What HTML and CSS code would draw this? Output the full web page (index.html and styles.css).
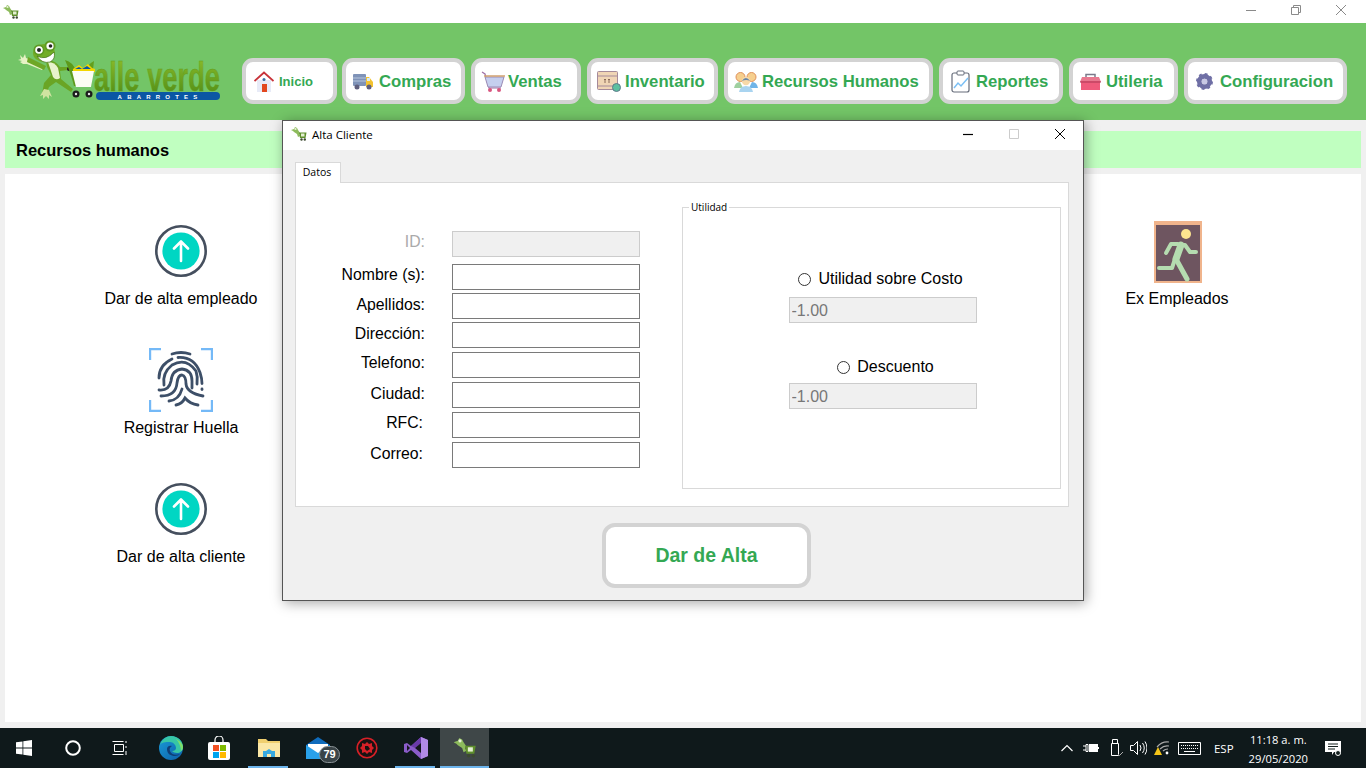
FILE: index.html
```html
<!DOCTYPE html>
<html lang="es">
<head>
    <meta charset="UTF-8">
    <title>Valle Verde Abarrotes</title>
    <link rel="stylesheet" href="styles.css">
</head>
<body>
    <svg class="svg-defs" width="0" height="0">
        <defs>
            <symbol id="frog-mini" viewBox="0 0 16 14">
                <path d="M0 3l3-1 1-2 2 1 1 2 2 3-1 1 1 2-2 1-1-3-3-2-1-1z" fill="#8dbb5c"/>
                <circle cx="4.500" cy="2" r="1.100" fill="#e8f2d8"/>
                <path d="M8 5.500h7.500l-1 5.500H9z" fill="#5f8f2c"/>
                <rect x="10" y="6.500" width="3.500" height="3" fill="#e4efd2"/>
                <circle cx="10.500" cy="12.500" r="1.200" fill="#3c4a30"/>
                <circle cx="13.800" cy="12.500" r="1.200" fill="#3c4a30"/>
            </symbol>
            <symbol id="up-circle" viewBox="0 0 52 52">
                <circle cx="26" cy="26" r="24.700" fill="#fff" stroke="#454f5e" stroke-width="2.600"/>
                <circle cx="26" cy="26" r="18.600" fill="#00d6c3"/>
                <path d="M26 36V17M19 23.500l7-7 7 7" fill="none" stroke="#fff" stroke-width="2.600" stroke-linecap="round" stroke-linejoin="round"/>
            </symbol>
            <linearGradient id="edge-blue" x1="0" y1="0" x2="1" y2="1">
                <stop offset="0" stop-color="#1a9bd8"/>
                <stop offset="1" stop-color="#0c5fa8"/>
            </linearGradient>
            <linearGradient id="logo-green" x1="0" y1="0" x2="0" y2="1">
                <stop offset="0" stop-color="#8fbe2c"/>
                <stop offset="1" stop-color="#4c8a14"/>
            </linearGradient>
        </defs>
    </svg>

    <div class="app-window">
        <div class="titlebar">
            <svg class="title-icon"><use href="#frog-mini"/></svg>
            <div class="win-controls">
                <svg width="12" height="12" viewBox="0 0 12 12"><path d="M1 6.500h10" stroke="#8a8a8a" fill="none"/></svg>
                <svg width="12" height="12" viewBox="0 0 12 12"><path d="M1.500 3.500h7v7h-7zM3.500 3.500v-2h7v7h-2" stroke="#8a8a8a" fill="none"/></svg>
                <svg width="12" height="12" viewBox="0 0 12 12"><path d="M1 1l10 10M11 1L1 11" stroke="#8a8a8a" fill="none"/></svg>
            </div>
        </div>

        <header class="topbar">
            <svg class="logo" viewBox="0 0 232 65" width="232" height="65">
                <path d="M10 20l3 3 2-4 1 4 3 1 15 8-2 3-15-6-4 0-3-2 2-1-4-1 3-1z" fill="#e6f2c4"/>
                <path d="M18 22l18 9-2 4-17-8z" fill="#6ea726"/>
                <path d="M36 26q8-2 14 6l8 0v3l-8 1 1 8 12 10-2 3-15-10-7 5-3 8-4-1 2-11 7-8-4-8z" fill="#6aa524"/>
                <path d="M38 27q7 0 10 6l2 10q-4 3-7-1z" fill="#e8f2cc"/>
                <path d="M34 54l5 1 3 7-3-2 0 4-3-3-3 3 0-4-3 1z" fill="#cfe3a0"/>
                <circle cx="59" cy="34" r="2" fill="#1c1c1c"/>
                <ellipse cx="34" cy="18" rx="11" ry="9" fill="#72ad26"/>
                <circle cx="29" cy="15" r="5.500" fill="#5e9a22"/>
                <circle cx="29" cy="15" r="3.800" fill="#fff"/>
                <circle cx="29" cy="15" r="2" fill="#222"/>
                <circle cx="40" cy="11" r="5.500" fill="#5e9a22"/>
                <circle cx="40" cy="11" r="3.600" fill="#fff"/>
                <circle cx="40.500" cy="11" r="1.800" fill="#222"/>
                <path d="M27 21q9 5 17-4 2 7-4 10-8 2-13-6z" fill="#fff" stroke="#3f6e14" stroke-width=".7"/>
                <path d="M55 25q8 2 11 11l3 15h-5q-3-12-9-26z" fill="#5d9a1b"/>
                <path d="M84 26l-3 26h-5l-2-13q2-9 10-13z" fill="#639f1c"/>
                <path d="M63 34l6-4 4 3 5-4 4 4 3 1v3H63z" fill="#f3d600"/>
                <path d="M65 34l4-2 3 2 5-3 4 3z" fill="#0b57a4"/>
                <path d="M62 36h22l-3 16H66z" fill="#fbfdf4"/>
                <circle cx="66" cy="59" r="3.500" fill="#1c1c1c"/>
                <circle cx="66" cy="59" r="1.200" fill="#e8e8e8"/>
                <circle cx="79" cy="59" r="3.500" fill="#1c1c1c"/>
                <circle cx="79" cy="59" r="1.200" fill="#e8e8e8"/>
                <text class="logo-name" x="84" y="56" textLength="126" lengthAdjust="spacingAndGlyphs">alle verde</text>
                <rect x="86" y="57" width="124" height="8" rx="4" fill="#0b57a4"/>
                <text class="logo-tag" x="150" y="63.500">ABARROTES</text>
            </svg>
            <nav class="main-nav">
                <button class="nav-btn btn-inicio">
                    <svg width="20" height="21" viewBox="0 0 20 21"><path d="M3 9h14v12H3z" fill="#e8ebf7"/><path d="M.5 10L10 1.500 19.500 10" fill="none" stroke="#c8333a" stroke-width="1.800"/><rect x="8" y="13" width="5" height="8" fill="#e2481f"/><circle cx="10" cy="8.500" r="1.500" fill="#3a6ea5"/></svg>
                    <span class="nav-small">Inicio</span>
                </button>
                <button class="nav-btn btn-compras">
                    <svg width="20" height="17" viewBox="0 0 20 17"><rect x="0" y="1" width="13" height="12" rx="1" fill="#7f93b8"/><path d="M0 5h13M0 8h13" stroke="#b8c6dd"/><path d="M13 4h3l4 5v5h-7z" fill="#f2c230"/><rect x="14" y="5" width="3" height="3" fill="#d9ecf5"/><circle cx="4" cy="14" r="2.500" fill="#5f5f7d"/><circle cx="16" cy="14" r="2.500" fill="#5f5f7d"/></svg>
                    <span>Compras</span>
                </button>
                <button class="nav-btn btn-ventas">
                    <svg width="24" height="21" viewBox="0 0 24 21"><path d="M1 1l3 2 4 14h12" fill="none" stroke="#a06fa6" stroke-width="1.200"/><path d="M4 6h19l-3 10H7z" fill="#c5cfef" stroke="#9b8bb5"/><path d="M3 5h21" stroke="#d0a070" stroke-width="1.500"/><circle cx="9" cy="19" r="2" fill="#d8557f"/><circle cx="18" cy="19" r="2" fill="#d8557f"/></svg>
                    <span>Ventas</span>
                </button>
                <button class="nav-btn btn-inventario">
                    <svg width="24" height="21" viewBox="0 0 24 21"><rect x=".5" y=".5" width="20" height="18" rx="1" fill="#f0d5b5" stroke="#a58a9a"/><path d="M1 5h19M1 15h19" stroke="#a58a9a"/><path d="M8 12V8M12 12V8M7 9l1-1 1 1M11 9l1-1 1 1" stroke="#8a6a5a" fill="none"/><circle cx="19.500" cy="16.500" r="4" fill="#5cc0a0" stroke="#5f7a8a"/></svg>
                    <span>Inventario</span>
                </button>
                <button class="nav-btn btn-rh">
                    <svg width="24" height="21" viewBox="0 0 24 21"><circle cx="6.500" cy="6" r="4.500" fill="#f6cf8e" stroke="#e0915c"/><circle cx="17.500" cy="6" r="4.500" fill="#f6cf8e" stroke="#e0915c"/><path d="M0 17q1-6 6-6l3 6z" fill="#9fd0a0"/><path d="M24 17q-1-6-6-6l-3 6z" fill="#6fb4e8"/><circle cx="12" cy="10" r="4.200" fill="#f7d9a8"/><path d="M7.800 10q4-6 8.400 0-4-2-8.400 0z" fill="#6a86a8"/><path d="M5 21q1-6 7-6t7 6z" fill="#a9d4f0"/></svg>
                    <span>Recursos Humanos</span>
                </button>
                <button class="nav-btn btn-reportes">
                    <svg width="19" height="23" viewBox="0 0 19 23"><rect x="1" y="3" width="17" height="19" rx="2" fill="#fff" stroke="#666c7a" stroke-width="1.200"/><rect x="6" y="1" width="7" height="4" rx="1" fill="#fff" stroke="#666c7a"/><path d="M3 18l4-5 3 3 7-8" fill="none" stroke="#7cc0f5" stroke-width="1.500"/></svg>
                    <span>Reportes</span>
                </button>
                <button class="nav-btn btn-utileria">
                    <svg width="21" height="17" viewBox="0 0 21 17"><path d="M6 5V1.500h9V5" fill="none" stroke="#7a7a8a" stroke-width="1.500"/><path d="M2 4h17l2 5H0z" fill="#e8788f"/><rect x="1" y="8" width="19" height="9" fill="#ef5b7c"/><path d="M0 9h21" stroke="#a93a55"/></svg>
                    <span>Utileria</span>
                </button>
                <button class="nav-btn btn-config">
                    <svg width="17" height="17" viewBox="0 0 18 18"><circle cx="9" cy="9" r="5.500" fill="none" stroke="#6f6fa5" stroke-width="5"/><circle cx="9" cy="9" r="8" fill="none" stroke="#6f6fa5" stroke-width="2" stroke-dasharray="3 3.280"/><circle cx="9" cy="9" r="2.800" fill="#c8c8e4"/></svg>
                    <span>Configuracion</span>
                </button>
            </nav>
        </header>

        <main class="content">
            <h2 class="section-title">Recursos humanos</h2>
            <section class="panel">
                <div class="actions">
                    <div class="action action-first">
                        <svg class="action-icon" width="52" height="52"><use href="#up-circle"/></svg>
                        <span>Dar de alta empleado</span>
                    </div>
                    <div class="action action-huella">
                        <svg width="64" height="64" viewBox="0 0 64 64">
                            <path d="M1 12V1h11M52 1h11v11M1 52v11h11M63 52v11H52" fill="none" stroke="#74b9f7" stroke-width="2.400"/>
                            <g fill="none" stroke="#3d4f68" stroke-width="2.800" stroke-linecap="round">
                                <path d="M23 6q9-3 18 0"/>
                                <path d="M10 30q0-13 13-19M29 9.500q16-1 22 15 2 6 2 11"/>
                                <path d="M15 37q-2-12 8-20 14-8 24 6 2 6 1 13"/>
                                <path d="M10 42q10 1 12-9 1-11 11-12 10 1 10 12l0 7"/>
                                <path d="M12 48q15 0 16-13 1-8 5-8 4 1 4 9 1 9 17 12"/>
                                <path d="M20 53q10-1 13-12"/>
                                <path d="M27 57q6-1 9-7 5 6 13 7"/>
                                <path d="M53 41v.5"/>
                            </g>
                        </svg>
                        <span>Registrar Huella</span>
                    </div>
                    <div class="action action-last">
                        <svg class="action-icon" width="52" height="52"><use href="#up-circle"/></svg>
                        <span>Dar de alta cliente</span>
                    </div>
                </div>
                <div class="actions actions-right">
                    <div class="action action-first">
                        <svg class="door-icon" width="48" height="62" viewBox="0 0 48 62">
                            <rect x="1" y="1" width="46" height="60" fill="#6e5560" stroke="#f0b48c" stroke-width="2"/>
                            <path d="M0 2.500h48" stroke="#f0b48c" stroke-width="3"/>
                            <circle cx="32" cy="13" r="5" fill="#fde58f"/>
                            <g fill="none" stroke="#b5dcb0" stroke-linejoin="round" stroke-linecap="round">
                                <path d="M26 24h5l5 7h6M24 23h-7l-5 9" stroke-width="4"/>
                                <path d="M27 24l-5 14" stroke-width="7"/>
                                <path d="M22 38l11 20" stroke-width="5"/>
                                <path d="M21 38l-3 9H5" stroke-width="4"/>
                            </g>
                        </svg>
                        <span>Ex Empleados</span>
                    </div>
                </div>
            </section>
        </main>

        <div class="dialog">
            <div class="dialog-title">
                <svg class="title-icon"><use href="#frog-mini"/></svg>
                <span class="dialog-name">Alta Cliente</span>
                <div class="dialog-controls">
                    <svg width="12" height="12" viewBox="0 0 12 12"><path d="M1 6.500h10" stroke="#000" stroke-width="1.200" fill="none"/></svg>
                    <svg width="12" height="12" viewBox="0 0 12 12"><path d="M1.500 1.500h9v9h-9z" stroke="#ccc" fill="none"/></svg>
                    <svg width="12" height="12" viewBox="0 0 12 12"><path d="M1 1l10 10M11 1L1 11" stroke="#000" fill="none"/></svg>
                </div>
            </div>
            <div class="dialog-body">
                <div class="tab">Datos</div>
                <div class="tab-panel">
                    <div class="form">
                        <div class="form-row row-id disabled"><label class="label-up">ID:</label><input type="text" disabled></div>
                        <div class="form-row row-first"><label class="label-up">Nombre (s):</label><input type="text"></div>
                        <div class="form-row"><label>Apellidos:</label><input type="text"></div>
                        <div class="form-row"><label>Dirección:</label><input type="text"></div>
                        <div class="form-row row-wide"><label class="label-up">Telefono:</label><input type="text"></div>
                        <div class="form-row row-wide"><label>Ciudad:</label><input type="text"></div>
                        <div class="form-row row-wide"><label class="label-short label-up">RFC:</label><input type="text"></div>
                        <div class="form-row row-wide"><label class="label-short">Correo:</label><input type="text"></div>
                    </div>
                    <fieldset class="utilidad">
                        <legend>Utilidad</legend>
                        <div class="radio-row radio-costo"><span class="radio"></span>Utilidad sobre Costo</div>
                        <input class="util-input" type="text" value="-1.00" disabled>
                        <div class="radio-row radio-desc"><span class="radio"></span>Descuento</div>
                        <input class="util-input util-input-desc" type="text" value="-1.00" disabled>
                    </fieldset>
                </div>
                <button class="submit-btn">Dar de Alta</button>
            </div>
        </div>
    </div>

    <footer class="taskbar">
        <div class="task-left">
            <span class="task-item"><svg width="16" height="16" viewBox="0 0 16 16"><path d="M0 2.300l6.500-.9v6.200H0zM7.300 1.300L16 0v7.600H7.300zM0 8.400h6.500v6.200L0 13.700zM7.300 8.400H16V16l-8.700-1.200z" fill="#fff"/></svg></span>
            <span class="task-item"><svg width="16" height="16" viewBox="0 0 16 16"><circle cx="8" cy="8" r="6.800" fill="none" stroke="#fff" stroke-width="2"/></svg></span>
            <span class="task-item task-view"><svg width="16" height="16" viewBox="0 0 16 16"><path d="M2.500 4.500h9v7h-9zM.5 1.500h11M.5 14.500h11M14 1v2M14 6v2M14 11v4" fill="none" stroke="#fff"/></svg></span>
            <span class="task-item"><svg width="24" height="24" viewBox="0 0 24 24"><circle cx="12" cy="12" r="12" fill="url(#edge-blue)"/><path d="M1 9C3 3 8 0 12 0c7 0 12 5 12 11 0 4-3 6-6 6-2 0-4-1-5-2 3 0 4-2 4-3 0-3-3-6-6-6C6 6 3 6 1 9z" fill="#37c6a6"/><path d="M17 3c4 2 7 5 7 8 0 2-1 3-2 4 0-4-2-9-5-12z" fill="#7ee06a"/><path d="M8 13c0 5 4 7 8 7 2 0 4-1 5-2-5 2-9 0-10-3-1-2 0-4 2-5-3-1-5 1-5 3z" fill="#0f3f78"/></svg></span>
            <span class="task-item task-nudge"><svg width="24" height="24" viewBox="0 0 24 24"><path d="M8 7V4a4 4 0 0 1 8 0v3" fill="none" stroke="#fff" stroke-width="1.200"/><rect x="1" y="6" width="22" height="18" rx="2" fill="#fff"/><rect x="6" y="9" width="6" height="6" fill="#f25022"/><rect x="13" y="9" width="6" height="6" fill="#7fba00"/><rect x="6" y="16" width="6" height="6" fill="#00a4ef"/><rect x="13" y="16" width="6" height="6" fill="#ffb900"/></svg></span>
            <span class="task-item task-active"><svg width="22" height="19" viewBox="0 0 22 19"><path d="M0 0h8l2 2h12v16H0z" fill="#f0cf6f"/><path d="M0 4h22v14H0z" fill="#fbe7a6"/><path d="M5 18v-6h3l3-2 3 2h3v6h-4v-3H9v3z" fill="#38a9e0"/></svg></span>
            <span class="task-item">
                <svg width="24" height="22" viewBox="0 0 24 22"><path d="M0 8L12 0l12 8v14H0z" fill="#0f6cbd"/><path d="M2 7h20v8l-10 3-10-3z" fill="#fff"/><path d="M0 8l12 8 12-8v14H0z" fill="#29a0ea"/></svg>
                <span class="badge">79</span>
            </span>
            <span class="task-item"><svg width="22" height="22" viewBox="0 0 22 22"><circle cx="11" cy="11" r="9.800" fill="#1a1212" stroke="#d62027" stroke-width="1.600"/><path d="M11 5l2 2 3-1v3l2 2-2 2v3l-3-1-2 2-2-2-3 1v-3l-2-2 2-2V6l3 1z" fill="#d62027"/><path d="M9 9h3l2 3-3 2-2-2z" fill="#1a1212"/></svg></span>
            <span class="task-item task-active"><svg width="24" height="24" viewBox="0 0 24 24"><path d="M17 1l7 3v16l-7 3L7 14l-4 3-3-1V8l3-1 4 3z" fill="#8a5cc9"/><path d="M17 1L7 10l4 2 6-5z" fill="#6a3aa8"/><path d="M17 7v10l-6-5z" fill="#14161c"/><path d="M3 9v6l3-3z" fill="#14161c"/><path d="M17 1l7 3v16l-7 3z" fill="#b18ae6"/></svg></span>
            <span class="task-item task-current"><svg width="24" height="20" viewBox="0 0 16 14"><use href="#frog-mini"/></svg></span>
        </div>
        <div class="tray">
            <svg width="12" height="8" viewBox="0 0 12 8"><path d="M.5 7L6 1.500 11.500 7" fill="none" stroke="#fff" stroke-width="1.200"/></svg>
            <svg class="tray-batt" width="16" height="10" viewBox="0 0 16 10"><path d="M0 3h3M0 7h3M3 1.500h2v7H3z" stroke="#fff" fill="none"/><rect x="6" y="1" width="9" height="8" fill="#fff"/><path d="M15 4h1v2h-1z" fill="#fff"/></svg>
            <svg class="tray-usb" width="14" height="18" viewBox="0 0 14 18"><path d="M2.500 4.500h7v12h-7zM3.500 .5h5v4h-5z" fill="none" stroke="#fff"/><path d="M9 15l1.500 1.500L14 13" fill="none" stroke="#aaa"/></svg>
            <svg class="tray-speaker" width="17" height="14" viewBox="0 0 17 14"><path d="M.5 4.500h3l4-4v13l-4-4h-3zM10 4q2 3 0 6M12.500 2q3.500 5 0 10M15 .5q4 6.500 0 13" fill="none" stroke="#fff"/></svg>
            <svg class="tray-wifi" width="16" height="14" viewBox="0 0 16 14"><path d="M3 6q5-6 12-5M6 8q4-4 9-3M9 10q2-2 5-2" fill="none" stroke="#a8a8a8" stroke-width="1.200"/><path d="M4 6l4 8H0z" fill="#f5c518"/><circle cx="13" cy="12" r="1.400" fill="#fff"/></svg>
            <svg width="23" height="13" viewBox="0 0 23 13"><path d="M.5 .5h22v12H.5z" fill="none" stroke="#fff"/><path d="M3 3.500h17M3 6.500h17" stroke="#fff" stroke-dasharray="1 1"/><path d="M6 9.500h11" stroke="#fff"/></svg>
            <span class="tray-lang">ESP</span>
            <div class="clock"><span>11:18 a. m.</span><span>29/05/2020</span></div>
            <svg class="tray-notify" width="16" height="15" viewBox="0 0 16 15"><path d="M0 0h16v11H9l-2 3v-3H0z" fill="#fff"/><path d="M3 3h10M3 5.500h10M3 8h7" stroke="#14201f"/><circle cx="13" cy="12" r="2.500" fill="#14201f" stroke="#fff"/></svg>
        </div>
    </footer>
</body>
</html>
```

FILE: styles.css
```css
* {
    box-sizing: border-box;
}
html, body {
    height: 100%;
}
body {
    margin: 0;
    width: 1366px;
    height: 768px;
    overflow: hidden;
    display: flex;
    flex-direction: column;
    font-family: "Liberation Sans", Arial, sans-serif;
    background-color: #f0f0f0;
    color: #000;
}
.svg-defs {
    position: absolute;
}
.app-window {
    position: relative;
    flex: 1;
    display: flex;
    flex-direction: column;
    min-height: 0;
}
.titlebar {
    height: 23px;
    background-color: #fff;
    display: flex;
    align-items: center;
    justify-content: space-between;
    padding-left: 3px;
    flex-shrink: 0;
}
.title-icon {
    width: 16px;
    height: 14px;
}
.win-controls {
    display: flex;
    gap: 33px;
    padding-right: 19px;
    margin-top: -4px;
}
.topbar {
    height: 97px;
    flex-shrink: 0;
    background-color: #73c567;
    display: flex;
    align-items: flex-start;
    padding: 35px 0 0 10px;
}
.logo {
    margin-top: -23px;
    flex-shrink: 0;
    overflow: visible;
}
.logo-name {
    font-family: "Liberation Sans", sans-serif;
    font-weight: bold;
    font-size: 40px;
    fill: url(#logo-green);
    stroke: #5f9c1c;
    stroke-width: 0.4px;
}
.logo-tag {
    font-family: "Liberation Sans", sans-serif;
    font-weight: bold;
    font-size: 6px;
    letter-spacing: 5.200px;
    text-anchor: middle;
    fill: #fff;
}
.main-nav {
    display: flex;
    gap: 5px;
}
.nav-btn {
    height: 46px;
    padding: 1px 0 0 7px;
    border: 4px solid #d3d3d3;
    border-radius: 11px;
    background-color: #fff;
    display: flex;
    align-items: center;
    justify-content: flex-start;
    gap: 5px;
    color: #34a853;
    font-family: "Liberation Sans", Arial, sans-serif;
    font-weight: bold;
    font-size: 16.700px;
    white-space: nowrap;
}
.nav-small {
    font-size: 13px;
}
.btn-inicio { width: 95px; padding-left: 8px; }
.btn-compras { width: 123px; gap: 6px; }
.btn-ventas { width: 110px; margin-left: 1px; padding-left: 6px; gap: 3px; }
.btn-inventario { width: 131px; margin-left: 1px; padding-left: 6px; gap: 4px; }
.btn-rh { width: 209px; margin-left: 1px; padding-left: 6px; gap: 4px; }
.btn-reportes { width: 124px; margin-left: 1px; padding-left: 8px; gap: 6px; }
.btn-utileria { width: 109px; margin-left: 1px; }
.btn-config { width: 163px; margin-left: 1px; padding-left: 8px; gap: 7px; }

.content {
    flex: 1;
    padding: 11px 5px 6px;
    display: flex;
    flex-direction: column;
    min-height: 0;
}
.section-title {
    height: 37px;
    margin: 0 0 6px;
    padding-left: 11px;
    background-color: #c0ffc0;
    font-size: 16.500px;
    font-weight: bold;
    line-height: 39px;
}
.panel {
    flex: 1;
    background-color: #fff;
    display: flex;
    justify-content: space-between;
}
.actions {
    width: 352px;
    display: flex;
    flex-direction: column;
    align-items: center;
}
.actions-right {
    width: 368px;
}
.action {
    display: flex;
    flex-direction: column;
    align-items: center;
    font-size: 16px;
    line-height: 18px;
}
.action-first {
    margin-top: 51px;
    gap: 13px;
}
.actions-right .action-first {
    margin-top: 47px;
    gap: 7px;
}
.door-icon {
    margin-left: 2px;
}
.action-huella {
    margin-top: 40px;
    gap: 7px;
}
.action-last {
    margin-top: 46px;
    gap: 13px;
}

/* ventana Alta Cliente */
.dialog {
    position: absolute;
    left: 282px;
    top: 120px;
    width: 802px;
    height: 481px;
    background-color: #f0f0f0;
    border: 1px solid #555;
    box-shadow: 2px 2px 12px rgba(0, 0, 0, 0.35);
    display: flex;
    flex-direction: column;
}
.dialog-title {
    height: 29px;
    flex-shrink: 0;
    background-color: #fff;
    display: flex;
    align-items: center;
    padding: 0 0 3px 8px;
}
.dialog-name {
    font-family: "Open Sans", sans-serif;
    font-size: 11.500px;
    margin-left: 5px;
}
.dialog-controls {
    margin-left: auto;
    display: flex;
    gap: 34px;
    padding-right: 17px;
}
.dialog-body {
    flex: 1;
    padding: 12px 14px 0 12px;
    display: flex;
    flex-direction: column;
    align-items: flex-start;
}
.tab {
    height: 21px;
    width: 46px;
    padding-right: 2px;
    background-color: #fff;
    border: 1px solid #d9d9d9;
    border-bottom: 0;
    font-family: "Open Sans", sans-serif;
    font-size: 10.500px;
    line-height: 19px;
    text-align: center;
    position: relative;
    z-index: 1;
}
.tab-panel {
    width: 774px;
    height: 325px;
    margin-top: -1px;
    background-color: #fff;
    border: 1px solid #d9d9d9;
    display: flex;
    align-items: flex-start;
    padding: 19px 7px 0 0;
    justify-content: space-between;
}
.form {
    margin-top: 29px;
    display: flex;
    flex-direction: column;
    gap: 3px;
}
.form-row {
    display: flex;
    align-items: center;
    height: 26px;
}
.form-row label {
    width: 129px;
    padding-bottom: 3px;
    text-align: right;
    font-size: 15.800px;
    margin-right: 27px;
}
.form-row label.label-short {
    width: 127px;
    margin-right: 29px;
}
.form-row label.label-up {
    padding-bottom: 5px;
}
.form-row input {
    width: 188px;
    height: 26px;
    border: 1px solid #7a7a7a;
    background-color: #fff;
    padding: 0;
}
.row-id label {
    color: #aaa;
}
.row-id input {
    border: 1px solid #ccc;
    background-color: #f0f0f0;
}
.row-first {
    margin-top: 4px;
}
.row-wide {
    margin-top: 1px;
}
.utilidad {
    width: 379px;
    height: 287px;
    margin: 0;
    padding: 0 0 0 22px;
    border: 1px solid #d9d9d9;
    display: flex;
    flex-direction: column;
    align-items: center;
}
.utilidad legend {
    margin-left: -16px;
    padding: 0 2px 0 2px;
    font-family: "Open Sans", sans-serif;
    font-size: 10px;
    line-height: 11px;
}
.radio-row {
    display: flex;
    align-items: center;
    gap: 7px;
    font-size: 16px;
    line-height: 18px;
}
.radio {
    width: 13px;
    height: 13px;
    border: 1px solid #333;
    border-radius: 50%;
    background-color: #fff;
}
.radio-costo {
    margin: 57px 4px 0 0;
}
.radio-desc {
    margin: 35px 0 0 6px;
}
.util-input {
    width: 188px;
    height: 26px;
    margin-top: 9px;
    padding: 1px 2px 0;
    border: 1px solid #ccc;
    background-color: #f0f0f0;
    color: #777;
    font-family: "Liberation Sans", sans-serif;
    font-size: 16px;
}
.util-input-desc {
    margin-top: 7px;
}
.submit-btn {
    width: 209px;
    height: 65px;
    margin: 16px 0 0 307px;
    background-color: #fff;
    border: 4px solid #d3d3d3;
    border-radius: 13px;
    color: #34a853;
    font-family: "Liberation Sans", Arial, sans-serif;
    font-weight: bold;
    font-size: 19.500px;
}

/* barra de tareas */
.taskbar {
    height: 40px;
    flex-shrink: 0;
    background-color: #0f191b;
    display: flex;
    justify-content: space-between;
    color: #fff;
}
.task-left {
    display: flex;
    margin-left: -1px;
}
.task-item {
    width: 49px;
    height: 40px;
    display: flex;
    align-items: center;
    justify-content: center;
    position: relative;
}
.task-view {
    padding-right: 3px;
}
.task-nudge {
    padding-right: 2px;
}
.task-active::after {
    content: "";
    position: absolute;
    left: 4px;
    right: 5px;
    bottom: 0;
    height: 2px;
    background-color: #6cb4ec;
}
.task-current {
    background-color: #3f4748;
    border-bottom: 2px solid #6cb4ec;
    padding-top: 2px;
}
.badge {
    position: absolute;
    right: 2px;
    bottom: 5px;
    width: 21px;
    height: 17px;
    border-radius: 9px;
    background-color: #3a4448;
    border: 1px solid #8a9296;
    font-size: 11px;
    font-weight: bold;
    line-height: 15px;
    text-align: center;
}
.tray {
    display: flex;
    align-items: center;
    gap: 8px;
    padding-right: 25px;
}
.tray-batt,
.tray-usb {
    margin-left: 2px;
}
.tray-speaker {
    margin-left: -1px;
}
.tray-wifi {
    margin-left: -1px;
}
.tray-lang {
    font-family: "Open Sans", sans-serif;
    font-size: 11.500px;
    margin-left: 5px;
}
.clock {
    display: flex;
    flex-direction: column;
    align-items: center;
    font-family: "Open Sans", sans-serif;
    font-size: 11.200px;
    line-height: 19px;
    margin: 1px 0 0 7px;
}
.tray-notify {
    margin-left: 9px;
}
```
